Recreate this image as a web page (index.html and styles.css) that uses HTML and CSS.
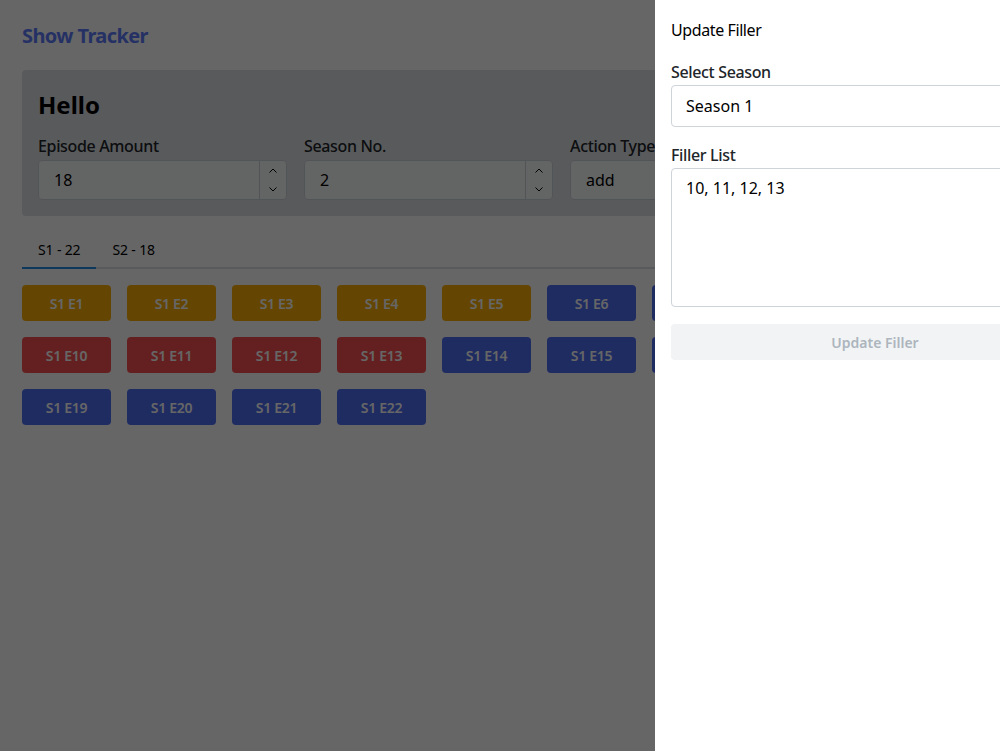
FILE: index.html
```html
<!DOCTYPE html>
<html lang="en">
<head>
<meta charset="utf-8">
<title>Show Tracker</title>
<link rel="stylesheet" href="styles.css">
</head>
<body>
<div class="page">
  <h1 class="brand">Show Tracker</h1>

  <section class="card">
    <h2 class="card-title">Hello</h2>
    <div class="fields">
      <div class="field">
        <label class="label">Episode Amount</label>
        <div class="control number">
          <span class="value">18</span>
          <span class="stepper">
            <span class="step"><svg width="8" height="5" viewBox="0 0 8 5"><path d="M0.5 4.5 L4 1 L7.5 4.5" fill="none" stroke="#000" stroke-width="1"/></svg></span>
            <span class="step"><svg width="8" height="5" viewBox="0 0 8 5"><path d="M0.5 0.5 L4 4 L7.5 0.5" fill="none" stroke="#000" stroke-width="1"/></svg></span>
          </span>
        </div>
      </div>
      <div class="field">
        <label class="label">Season No.</label>
        <div class="control number">
          <span class="value">2</span>
          <span class="stepper">
            <span class="step"><svg width="8" height="5" viewBox="0 0 8 5"><path d="M0.5 4.5 L4 1 L7.5 4.5" fill="none" stroke="#000" stroke-width="1"/></svg></span>
            <span class="step"><svg width="8" height="5" viewBox="0 0 8 5"><path d="M0.5 0.5 L4 4 L7.5 0.5" fill="none" stroke="#000" stroke-width="1"/></svg></span>
          </span>
        </div>
      </div>
      <div class="field">
        <label class="label">Action Type</label>
        <div class="control">
          <span class="value">add</span>
        </div>
      </div>
    </div>
  </section>

  <div class="tabs">
    <div class="tab-list">
      <span class="tab active">S1 - 22</span>
      <span class="tab">S2 - 18</span>
    </div>
    <div class="episodes">
      <span class="ep yellow">S1 E1</span>
      <span class="ep yellow">S1 E2</span>
      <span class="ep yellow">S1 E3</span>
      <span class="ep yellow">S1 E4</span>
      <span class="ep yellow">S1 E5</span>
      <span class="ep blue">S1 E6</span>
      <span class="ep blue">S1 E7</span>
      <span class="ep blue">S1 E8</span>
      <span class="ep blue">S1 E9</span>
      <span class="ep red">S1 E10</span>
      <span class="ep red">S1 E11</span>
      <span class="ep red">S1 E12</span>
      <span class="ep red">S1 E13</span>
      <span class="ep blue">S1 E14</span>
      <span class="ep blue">S1 E15</span>
      <span class="ep blue">S1 E16</span>
      <span class="ep blue">S1 E17</span>
      <span class="ep blue">S1 E18</span>
      <span class="ep blue">S1 E19</span>
      <span class="ep blue">S1 E20</span>
      <span class="ep blue">S1 E21</span>
      <span class="ep blue">S1 E22</span>
    </div>
  </div>
</div>

<div class="overlay"></div>

<aside class="drawer">
  <div class="drawer-inner">
    <div class="drawer-title">Update Filler</div>
    <div class="drawer-field">
      <label class="label dlabel">Select Season</label>
      <div class="dcontrol select">Season 1</div>
    </div>
    <div class="drawer-field">
      <label class="label dlabel">Filler List</label>
      <div class="dcontrol textarea">10, 11, 12, 13</div>
    </div>
    <div class="update-btn">Update Filler</div>
  </div>
</aside>
</body>
</html>
```

FILE: styles.css
```css
html, body {
  margin: 0;
  padding: 0;
  overflow: hidden;
  background: #ffffff;
  font-family: "Noto Sans", "Open Sans", sans-serif;
  color: #212529;
}

.page {
  padding: 22px;
}

.brand {
  margin: 0 0 20px;
  font-size: 20px;
  line-height: 28px;
  font-weight: 700;
  letter-spacing: -0.6px;
  color: #5c7cfa;
}

.card {
  background: #dee2e6;
  border-radius: 4px;
  padding: 17px 16px 16px;
}

.card-title {
  margin: 0 0 11px;
  font-size: 24px;
  line-height: 36px;
  font-weight: 700;
  color: #000;
}

.fields {
  display: flex;
  gap: 17px;
}

.field {
  display: flex;
  flex-direction: column;
  width: 249px;
  flex: none;
}

.label {
  display: block;
  font-size: 16px;
  line-height: 24px;
  font-weight: 500;
  letter-spacing: -0.35px;
  color: #212529;
  margin-bottom: 2px;
}

.control {
  box-sizing: border-box;
  height: 40px;
  border: 1px solid #ced4da;
  border-radius: 4px;
  background: #f8f9fa;
  display: flex;
  align-items: center;
  font-size: 16px;
  color: #000;
  overflow: hidden;
}

.value {
  flex: 1;
  padding-left: 15px;
}

.stepper {
  width: 26px;
  align-self: stretch;
  border-left: 1px solid #ced4da;
  display: flex;
  flex-direction: column;
}

.step {
  flex: 1;
  display: flex;
  align-items: center;
  justify-content: center;
}

.tabs {
  margin-top: 16px;
}

.tab-list {
  display: flex;
  border-bottom: 2px solid #dee2e6;
}

.tab {
  height: 35px;
  padding: 0 16px;
  display: flex;
  align-items: center;
  font-size: 14px;
  color: #000;
  letter-spacing: -0.15px;
  border-bottom: 2px solid transparent;
  margin-bottom: -2px;
}

.tab.active {
  border-bottom-color: #228be6;
}

.episodes {
  margin-top: 16px;
  display: flex;
  flex-wrap: wrap;
  gap: 16px;
}

.ep {
  width: 89px;
  height: 36px;
  border-radius: 4px;
  display: flex;
  align-items: center;
  justify-content: center;
  color: #fff;
  font-size: 14px;
  font-weight: 600;
  letter-spacing: -0.3px;
}

.yellow { background: #fab005; }
.red { background: #fa5252; }
.blue { background: #4c6ef5; }

.overlay {
  position: fixed;
  inset: 0;
  background: rgba(0, 0, 0, 0.6);
}

.drawer {
  position: fixed;
  top: 0;
  bottom: 0;
  right: 0;
  width: 345px;
  background: #fff;
  overflow: hidden;
}

.drawer-inner {
  width: 408px;
  padding: 17px 16px 16px;
}

.drawer-title {
  font-size: 16px;
  line-height: 26px;
  letter-spacing: -0.4px;
  color: #000;
  margin-bottom: 17px;
}

.drawer-field {
  margin-bottom: 16px;
}

.dlabel {
  margin-bottom: 1px;
}

.dcontrol {
  box-sizing: border-box;
  border: 1px solid #ced4da;
  border-radius: 4px;
  background: #fff;
  font-size: 16px;
  color: #000;
  padding: 0 14px;
}

.select {
  height: 42px;
  display: flex;
  align-items: center;
}

.textarea {
  height: 139px;
  padding-top: 7px;
  line-height: 24px;
}

.update-btn {
  margin-top: 17px;
  height: 36px;
  border-radius: 4px;
  background: #f1f3f5;
  color: #adb5bd;
  font-size: 14px;
  font-weight: 600;
  display: flex;
  align-items: center;
  justify-content: center;
}
```
